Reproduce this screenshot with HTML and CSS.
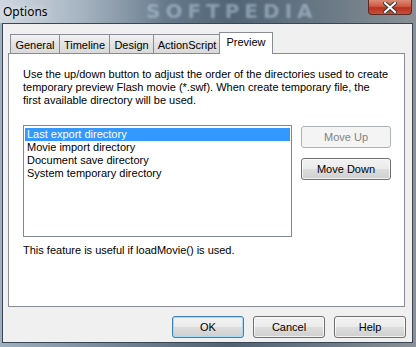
FILE: index.html
```html
<!DOCTYPE html>
<html lang="en">

<head>
    <meta charset="UTF-8">
    <title>Options</title>
    <link rel="stylesheet" href="styles.css">
</head>

<body>
    <div class="window">
        <div class="titlebar">
            <span class="title">Options</span>
            <span class="watermark">SOFTPEDIA</span>
            <div class="close">
                <svg width="14" height="11" viewBox="0 0 14 11">
                    <path d="M2 1 L12 10 M12 1 L2 10" stroke="#3a3a3a" stroke-width="4" stroke-linecap="square" />
                    <path d="M2 1 L12 10 M12 1 L2 10" stroke="#fff" stroke-width="2" stroke-linecap="square" />
                </svg>
            </div>
        </div>
        <div class="client">
            <div class="tabs">
                <div class="tab tab-general">General</div>
                <div class="tab tab-timeline">Timeline</div>
                <div class="tab tab-design">Design</div>
                <div class="tab tab-as">ActionScript</div>
                <div class="tab tab-preview active">Preview</div>
            </div>
            <div class="panel">
                <p class="intro">Use the up/down button to adjust the order of the directories used to create<br>
                    temporary preview Flash movie (*.swf). When create temporary file, the<br>
                    first available directory will be used.</p>
                <div class="dirs">
                    <ul class="listbox">
                        <li class="selected">Last export directory</li>
                        <li>Movie import directory</li>
                        <li>Document save directory</li>
                        <li>System temporary directory</li>
                    </ul>
                    <div class="side-buttons">
                        <button type="button" class="btn side" disabled>Move Up</button>
                        <button type="button" class="btn side">Move Down</button>
                    </div>
                </div>
                <p class="note">This feature is useful if loadMovie() is used.</p>
            </div>
            <div class="footer">
                <button type="button" class="btn default">OK</button>
                <button type="button" class="btn">Cancel</button>
                <button type="button" class="btn">Help</button>
            </div>
        </div>
    </div>
</body>

</html>
```

FILE: styles.css
```css
body {
    margin: 0;
    padding: 0;
    width: 416px;
    height: 347px;
    overflow: hidden;
    font-family: 'Liberation Sans', Arial, sans-serif;
    font-size: 11px;
    color: #000;
}

.window {
    width: 416px;
    height: 347px;
    box-sizing: border-box;
    padding: 0 3px 4px 2px;
    background: linear-gradient(90deg, #9fb0c0 0%, #6e8294 30%, #4f6375 55%, #6c7a86 80%, #8a9096 100%);
    display: flex;
    flex-direction: column;
}

.titlebar {
    position: relative;
    height: 23px;
    flex: none;
    background: linear-gradient(90deg, rgba(215, 222, 230, 0.85) 0%, rgba(190, 200, 210, 0.6) 20%, rgba(120, 135, 150, 0.2) 40%, rgba(0, 0, 0, 0) 60%);
    margin: 0 -3px 0 -2px;
}

.title {
    position: absolute;
    left: 3px;
    top: 3px;
    font-family: 'Noto Sans', 'Liberation Sans', sans-serif;
    font-size: 12px;
    color: #000;
    text-shadow: 0 0 6px rgba(255, 255, 255, 0.9);
    z-index: 2;
}

.watermark {
    position: absolute;
    left: 146px;
    top: 0;
    line-height: 23px;
    font-family: 'DejaVu Sans', sans-serif;
    font-weight: bold;
    font-size: 20px;
    letter-spacing: 5px;
    color: rgba(190, 210, 228, 0.5);
    filter: blur(1.2px);
}

.close {
    position: absolute;
    right: 4px;
    top: 0;
    width: 44px;
    height: 15px;
    box-sizing: border-box;
    border: 1px solid #5a2a24;
    border-top: none;
    border-radius: 0 0 4px 4px;
    background: linear-gradient(#dc8a78 0%, #cf5a42 45%, #b7321e 55%, #c8503c 100%);
    display: flex;
    align-items: center;
    justify-content: center;
    z-index: 2;
}

.client {
    flex: 1;
    background: #f0f0f0;
    border: 1px solid #3b4652;
    padding: 8px 6px 0 5px;
    display: flex;
    flex-direction: column;
}

.tabs {
    display: flex;
    align-items: flex-end;
    height: 21px;
    padding-left: 2px;
    position: relative;
    z-index: 1;
}

.tab {
    box-sizing: border-box;
    height: 19px;
    border: 1px solid #898c95;
    border-bottom: none;
    margin-right: -1px;
    background: linear-gradient(#f3f3f3, #e3e3e3 50%, #d9d9d9);
    text-align: center;
    line-height: 18px;
    padding-top: 1px;
}

.tab-general { width: 50px; }
.tab-timeline { width: 51px; }
.tab-design { width: 45px; }
.tab-as { width: 68px; }

.tab-preview {
    width: 54px;
}

.tab.active {
    height: 22px;
    background: #fff;
    margin-left: -1px;
    margin-bottom: -1px;
    line-height: 19px;
    padding-top: 0;
}

.panel {
    box-sizing: border-box;
    width: 397px;
    height: 254px;
    background: #fff;
    border: 1px solid #898c95;
    padding: 14px 10px 0 14px;
}

.intro {
    margin: 0;
    line-height: 13px;
}

.dirs {
    display: flex;
    margin-top: 18px;
}

.listbox {
    list-style: none;
    margin: 0;
    padding: 2px 1px;
    box-sizing: border-box;
    width: 269px;
    height: 112px;
    border: 1px solid #828790;
}

.listbox li {
    height: 13px;
    line-height: 13px;
    padding-left: 2px;
}

.listbox li.selected {
    background: #3399ff;
    color: #fff;
}

.side-buttons {
    display: flex;
    flex-direction: column;
    gap: 10px;
    margin-left: 9px;
    padding-top: 1px;
}

.btn {
    box-sizing: border-box;
    width: 72px;
    height: 22px;
    font-family: 'Liberation Sans', Arial, sans-serif;
    font-size: 11px;
    color: #000;
    border: 1px solid #707070;
    border-radius: 3px;
    background: linear-gradient(#f2f2f2 0%, #ebebeb 50%, #dddddd 51%, #cfcfcf 100%);
    box-shadow: inset 0 0 0 1px rgba(255, 255, 255, 0.7);
    padding: 0;
}

.btn.side {
    width: 90px;
}

.btn:disabled {
    color: #838383;
    border-color: #adb2b5;
    background: #f4f4f4;
    box-shadow: none;
}

.btn.default {
    border-color: #3c7fb1;
    box-shadow: inset 0 0 0 1px #a8dcf5;
}

.note {
    margin: 7px 0 0;
    line-height: 13px;
}

.footer {
    display: flex;
    justify-content: flex-end;
    gap: 9px;
    margin-top: 9px;
}
```
